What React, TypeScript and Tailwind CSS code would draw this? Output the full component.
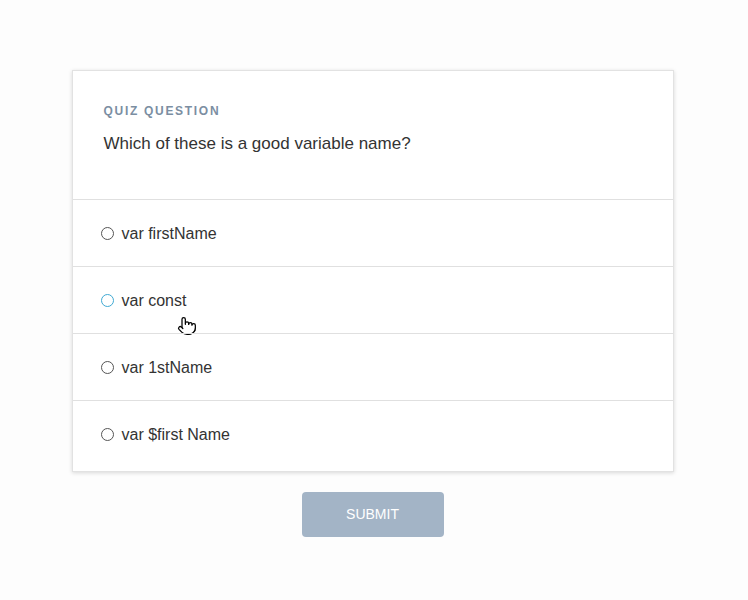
import { Pointer } from 'lucide-react'

const options = ['var firstName', 'var const', 'var 1stName', 'var $first Name']

export default function App() {
  return (
    <div
      className="min-h-[600px] bg-[#fdfdfd] flex flex-col items-center pt-[70px] pr-[3px]"
      style={{ fontFamily: '"Liberation Sans", Arial, sans-serif' }}
    >
      <div className="w-[602px] bg-white border border-[#e2e2e2] shadow-[0_1px_4px_rgba(0,0,0,0.15)] pb-[4px]">
        <div className="px-[31px] pt-[33px] pb-[45px]">
          <div className="text-[12px] leading-[14px] font-bold tracking-[1.7px] text-[#7b8ea2]">
            QUIZ QUESTION
          </div>
          <div className="mt-[15px] text-[17px] leading-[21px] text-[#333]">
            Which of these is a good variable name?
          </div>
        </div>

        {options.map((opt, i) => (
          <div
            key={opt}
            className="relative h-[67px] border-t border-[#e0e0e0] flex items-center pl-[28px] pr-[28px] gap-[8px] pt-[1px]"
          >
            <span
              className={
                i === 1
                  ? 'w-[13px] h-[13px] rounded-full border-[1.5px] border-[#3fa9d3]'
                  : 'w-[13px] h-[13px] rounded-full border-[1.5px] border-[#555]'
              }
            />
            <span className="text-[16px] leading-[20px] text-[#333]">{opt}</span>
            {i === 1 && (
              <Pointer
                size={20}
                strokeWidth={1.5}
                className="absolute left-[104px] top-[49px] text-black fill-white"
              />
            )}
          </div>
        ))}
      </div>

      <button className="mt-[20px] w-[142px] h-[45px] rounded-[4px] bg-[#a3b4c6] text-white text-[14px]">
        SUBMIT
      </button>
    </div>
  )
}
